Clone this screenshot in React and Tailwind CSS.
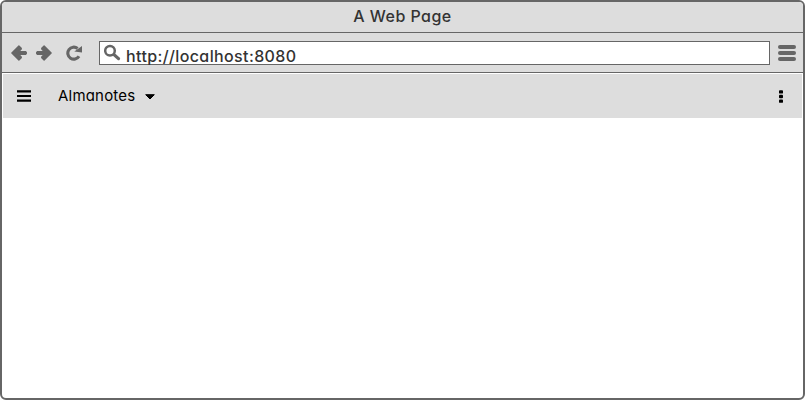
function BackIcon() {
  return (
    <svg width="16" height="16" viewBox="0 0 16 16" fill="#666" stroke="#666" strokeWidth="1.4" strokeLinejoin="round">
      <path d="M.9 8 7.9 1.1 10.2 3.2V4L7.8 6.6H14.4L15.3 7.5V8.5L14.4 9.4H7.8L10.2 12V12.8L7.9 14.9Z" />
    </svg>
  );
}

function ReloadIcon() {
  return (
    <svg width="17" height="16" viewBox="0 0 17 16">
      <path d="M13 11.2A6 6 0 1 1 11.6 3.5" fill="none" stroke="#666" strokeWidth="3.1" />
      <path d="M16 1v6.6L8.3 6.4z" fill="#666" />
    </svg>
  );
}

function SearchIcon() {
  return (
    <svg width="17" height="17" viewBox="0 0 17 17" fill="none" stroke="#666">
      <circle cx="6" cy="6.8" r="4.8" strokeWidth="2.5" />
      <path d="m10 10.6 4.5 4" strokeWidth="3.2" strokeLinecap="round" />
    </svg>
  );
}

export default function App() {
  return (
    <div className="flex h-[400px] w-[805px] flex-col overflow-hidden rounded-[6px] border-2 border-[#666] bg-white font-['Inter','Lato',sans-serif] [font-feature-settings:'cv11','ss03']">
      <header className="flex h-[31px] shrink-0 items-center justify-center border-b border-[#666] bg-[#ddd] pb-[2px]">
        <h1 className="text-[16px] font-medium leading-5 tracking-[0.45px] whitespace-nowrap text-[#333]">A Web Page</h1>
      </header>
      <div className="flex h-10 shrink-0 items-center border-b border-[#666] bg-[#ddd] pr-[7px] pl-[9px]">
        <button aria-label="Back"><BackIcon /></button>
        <button aria-label="Forward" className="ml-[9px] rotate-180"><BackIcon /></button>
        <button aria-label="Reload" className="ml-[14px]"><ReloadIcon /></button>
        <div className="mt-px ml-[16px] flex h-[24px] w-[671px] items-start border border-[#666] bg-white pt-[2px] pl-[4px]">
          <SearchIcon />
          <span className="ml-[5px] pt-[2px] text-[16px] font-medium leading-5 tracking-[0.38px] whitespace-nowrap text-[#333]">http://localhost:8080</span>
        </div>
        <button aria-label="Menu" className="ml-auto flex w-[18px] flex-col gap-[2px]">
          <span className="h-1 rounded-full bg-[#666]" />
          <span className="h-1 rounded-full bg-[#666]" />
          <span className="h-1 rounded-full bg-[#666]" />
        </button>
      </div>
      <nav className="mx-px mt-px flex h-11 shrink-0 items-center bg-[#ddd] pr-[19px] pl-[14px] text-black">
        <button aria-label="Open navigation">
          <svg width="14" height="12" viewBox="0 0 14 12">
            <path d="M0 1.3h14M0 6h14M0 10.7h14" stroke="#000" strokeWidth="2.2" />
          </svg>
        </button>
        <span className="ml-[27px] text-[15px] leading-5 tracking-[0.2px] whitespace-nowrap">Almanotes</span>
        <svg className="mt-px ml-[10px]" width="10" height="6" viewBox="0 0 10 6"><path d="M.7.7h8.6L5 5z" stroke="#000" strokeLinejoin="round" /></svg>
        <button aria-label="More" className="ml-auto">
          <svg width="4" height="13" viewBox="0 0 4 13">
            <rect y=".2" width="4" height="3.4" rx=".9" />
            <rect y="4.8" width="4" height="3.4" rx=".9" />
            <rect y="9.4" width="4" height="3.4" rx=".9" />
          </svg>
        </button>
      </nav>
      <main className="flex-1" />
    </div>
  );
}
